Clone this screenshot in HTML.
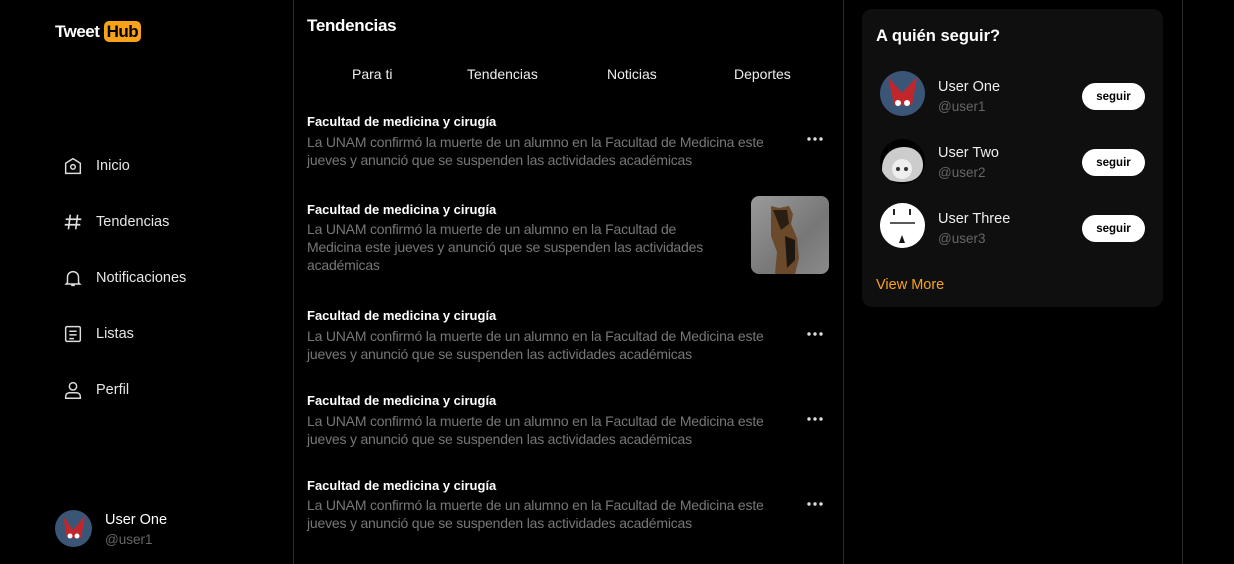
<!DOCTYPE html>
<html><head><meta charset="utf-8"><style>
*{margin:0;padding:0;box-sizing:border-box}
body{width:1234px;height:564px;background:#000;color:#fff;font-family:"Liberation Sans",sans-serif;position:relative;overflow:hidden}
.a{position:absolute}
.vl{position:absolute;top:0;width:1px;height:564px;background:#2a2a2a}
.nav{position:absolute;left:62px;font-size:14.5px;color:#e6e6e6;display:flex;align-items:center;height:22px}
.nav svg{width:22px;height:22px;margin-right:12px;flex-shrink:0;display:block}
.title{font-size:13px;font-weight:bold;white-space:nowrap}
.body{font-size:14px;color:#777;line-height:18px;letter-spacing:-0.2px}
.dots{position:absolute;left:806px;width:18px;height:4px}
.tab{position:absolute;top:66px;font-size:14px;color:#eee}
.btn{position:absolute;left:1082px;width:63px;height:27px;background:#fff;color:#000;border-radius:14px;font-size:11.5px;font-weight:bold;display:flex;align-items:center;justify-content:center}
.av{position:absolute;width:45px;height:45px;border-radius:50%;overflow:hidden}
.un{position:absolute;left:938px;font-size:14.5px;color:#eee}
.uh{position:absolute;left:938px;font-size:13.5px;color:#666}
</style></head><body>
<div class="vl" style="left:293px"></div>
<div class="vl" style="left:843px"></div>
<div class="vl" style="left:1182px"></div>

<div class="a" style="left:55px;top:21px;font-size:17px;font-weight:bold;letter-spacing:-0.5px;line-height:22px">Tweet <span style="background:#f7a21b;color:#000;border-radius:5px;padding:1px 3px">Hub</span></div>

<div class="nav" style="top:155px"><svg viewBox="0 0 24 24" fill="none" stroke="#ddd" stroke-width="1.6"><path d="M4 9l8-5 8 5v11H4z"/><circle cx="12" cy="13" r="2.5"/></svg>Inicio</div>
<div class="nav" style="top:211px"><svg viewBox="0 0 24 24" fill="none" stroke="#ddd" stroke-width="1.8"><path d="M9 4L7 20M17 4l-2 16M4 9h17M3 15h17"/></svg>Tendencias</div>
<div class="nav" style="top:267px"><svg viewBox="0 0 24 24" fill="none" stroke="#ddd" stroke-width="1.6"><path d="M6 17V11a6 6 0 0112 0v6l1.5 1.5h-15zM10 20h4"/></svg>Notificaciones</div>
<div class="nav" style="top:323px"><svg viewBox="0 0 24 24" fill="none" stroke="#ddd" stroke-width="1.6"><rect x="4" y="4" width="16" height="16" rx="1.5"/><path d="M8 9h8M8 13h8M8 17h5"/></svg>Listas</div>
<div class="nav" style="top:379px"><svg viewBox="0 0 24 24" fill="none" stroke="#ddd" stroke-width="1.6"><circle cx="12" cy="8" r="4"/><path d="M4 21v-2a4 4 0 014-4h8a4 4 0 014 4v2z"/></svg>Perfil</div>

<div class="av" style="left:55px;top:510px;width:37px;height:37px;background:#3b5577"><svg width="37" height="37" viewBox="0 0 37 37"><path d="M8 6l10 14 12-14-4 22H12z" fill="#c0262a"/><circle cx="15" cy="26" r="2.5" fill="#fff"/><circle cx="22" cy="26" r="2.5" fill="#fff"/></svg></div>
<div class="a" style="left:105px;top:512px;font-size:14.5px">User One</div>
<div class="a" style="left:105px;top:532px;font-size:13.5px;color:#666">@user1</div>

<div class="a" style="left:307px;top:16px;font-size:17px;font-weight:bold;letter-spacing:-0.3px">Tendencias</div>
<div class="tab" style="left:352px">Para ti</div>
<div class="tab" style="left:467px">Tendencias</div>
<div class="tab" style="left:607px">Noticias</div>
<div class="tab" style="left:734px">Deportes</div>

<div class="a title" style="left:307px;top:114px">Facultad de medicina y cirugía</div>
<div class="a body" style="left:307px;top:133px;width:480px">La UNAM confirmó la muerte de un alumno en la Facultad de Medicina este jueves y anunció que se suspenden las actividades académicas</div>
<svg class="dots" style="top:137px" viewBox="0 0 18 4"><circle cx="3" cy="2" r="1.7" fill="#ddd"/><circle cx="9" cy="2" r="1.7" fill="#ddd"/><circle cx="15" cy="2" r="1.7" fill="#ddd"/></svg>

<div class="a title" style="left:307px;top:202px">Facultad de medicina y cirugía</div>
<div class="a body" style="left:307px;top:220px;width:415px">La UNAM confirmó la muerte de un alumno en la Facultad de Medicina este jueves y anunció que se suspenden las actividades académicas</div>
<div class="a" style="left:751px;top:196px;width:78px;height:78px;border-radius:8px;overflow:hidden;background:linear-gradient(135deg,#9a9a9a,#777 60%,#8a8a8a)"><svg width="78" height="78" viewBox="0 0 78 78"><path d="M20 10l8 2 10-2 4 8-2 10 6 14 2 20-4 16H24l2-22-6-16z" fill="#6a4a2a"/><path d="M22 14l14 0 2 14-8 6z" fill="#2a1e14"/><path d="M34 40l10 4 0 20-8 8z" fill="#1e1610"/></svg></div>

<div class="a title" style="left:307px;top:308px">Facultad de medicina y cirugía</div>
<div class="a body" style="left:307px;top:327px;width:480px">La UNAM confirmó la muerte de un alumno en la Facultad de Medicina este jueves y anunció que se suspenden las actividades académicas</div>
<svg class="dots" style="top:332px" viewBox="0 0 18 4"><circle cx="3" cy="2" r="1.7" fill="#ddd"/><circle cx="9" cy="2" r="1.7" fill="#ddd"/><circle cx="15" cy="2" r="1.7" fill="#ddd"/></svg>

<div class="a title" style="left:307px;top:393px">Facultad de medicina y cirugía</div>
<div class="a body" style="left:307px;top:412px;width:480px">La UNAM confirmó la muerte de un alumno en la Facultad de Medicina este jueves y anunció que se suspenden las actividades académicas</div>
<svg class="dots" style="top:417px" viewBox="0 0 18 4"><circle cx="3" cy="2" r="1.7" fill="#ddd"/><circle cx="9" cy="2" r="1.7" fill="#ddd"/><circle cx="15" cy="2" r="1.7" fill="#ddd"/></svg>

<div class="a title" style="left:307px;top:478px">Facultad de medicina y cirugía</div>
<div class="a body" style="left:307px;top:496px;width:480px">La UNAM confirmó la muerte de un alumno en la Facultad de Medicina este jueves y anunció que se suspenden las actividades académicas</div>
<svg class="dots" style="top:502px" viewBox="0 0 18 4"><circle cx="3" cy="2" r="1.7" fill="#ddd"/><circle cx="9" cy="2" r="1.7" fill="#ddd"/><circle cx="15" cy="2" r="1.7" fill="#ddd"/></svg>

<div class="a" style="left:862px;top:9px;width:301px;height:298px;background:#0f0f0f;border-radius:10px"></div>
<div class="a" style="left:876px;top:27px;font-size:16.5px;font-weight:bold">A quién seguir?</div>

<div class="av" style="left:880px;top:71px;background:#3b5577"><svg width="45" height="45" viewBox="0 0 45 45"><path d="M8 6l14 16 15-16-5 28H14z" fill="#c0262a"/><circle cx="18" cy="32" r="3" fill="#fff"/><circle cx="27" cy="32" r="3" fill="#fff"/></svg></div>
<div class="un" style="top:79px">User One</div><div class="uh" style="top:99px">@user1</div>
<div class="btn" style="top:83px">seguir</div>

<div class="av" style="left:880px;top:139px;background:#000"><svg width="45" height="45" viewBox="0 0 45 45"><path d="M2 30c0-14 10-22 22-22s19 8 19 18c0 10-8 17-20 17S2 40 2 30z" fill="#ccc"/><circle cx="22" cy="30" r="10" fill="#eee"/><circle cx="18" cy="30" r="2" fill="#333"/><circle cx="26" cy="30" r="2" fill="#333"/></svg></div>
<div class="un" style="top:145px">User Two</div><div class="uh" style="top:165px">@user2</div>
<div class="btn" style="top:149px">seguir</div>

<div class="av" style="left:880px;top:203px;background:#fff"><svg width="45" height="45" viewBox="0 0 45 45"><path d="M10 20h25" stroke="#222" stroke-width="1.5"/><path d="M14 6v6M30 6v6" stroke="#222" stroke-width="2"/><path d="M22 32l-3 8h6z" fill="#111"/></svg></div>
<div class="un" style="top:211px">User Three</div><div class="uh" style="top:231px">@user3</div>
<div class="btn" style="top:215px">seguir</div>

<div class="a" style="left:876px;top:277px;font-size:14.5px;color:#f7a21b">View More</div>
</body></html>
